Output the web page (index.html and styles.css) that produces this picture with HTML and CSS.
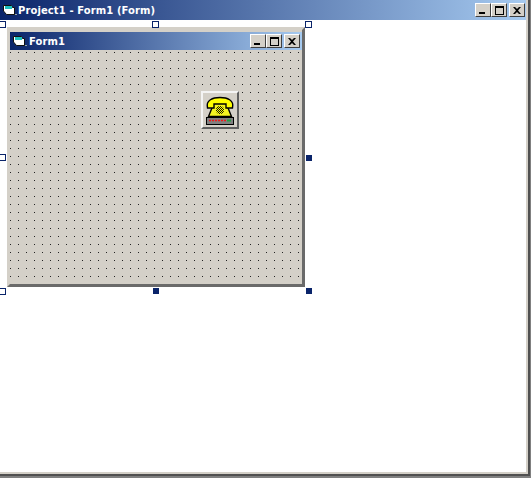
FILE: index.html
```html
<!DOCTYPE html>
<html lang="en">
<head>
    <meta charset="UTF-8">
    <meta name="viewport" content="width=device-width, initial-scale=1.0">
    <title>Project1 - Form1 (Form)</title>
    <link rel="stylesheet" href="styles.css">
</head>
<body>
    <div class="window designer">
        <div class="titlebar">
            <svg class="app-icon" viewBox="0 0 16 16" width="16" height="16">
                <path d="M1.5 3.5 H9.5 L10.5 5.5 H12.5 V12.5 H4.5 L1.5 9 Z" fill="#fff" stroke="#111" stroke-width="1"/>
                <path d="M3 4 H10 V7 H3 Z" fill="#20c0c0"/>
                <path d="M13 12 h2 v1 h-2 Z" fill="#9aa"/>
            </svg>
            <span class="title">Project1 - Form1 (Form)</span>
            <div class="caption-buttons">
                <button class="caption-btn"><span class="glyph-min"></span></button>
                <button class="caption-btn"><span class="glyph-max"></span></button>
                <button class="caption-btn close-btn">
                    <svg viewBox="0 0 8 7" width="8" height="7"><path d="M0 0 H2 L4 2 L6 0 H8 L5 3.5 L8 7 H6 L4 5 L2 7 H0 L3 3.5 Z" fill="#000"/></svg>
                </button>
            </div>
        </div>
        <div class="client">
            <div class="form-window">
                <div class="titlebar form-titlebar">
                    <svg class="app-icon" viewBox="0 0 16 16" width="16" height="16">
                        <path d="M1.5 3.5 H9.5 L10.5 5.5 H12.5 V12.5 H4.5 L1.5 9 Z" fill="#fff" stroke="#111" stroke-width="1"/>
                        <path d="M3 4 H10 V7 H3 Z" fill="#20c0c0"/>
                        <path d="M13 12 h2 v1 h-2 Z" fill="#9aa"/>
                    </svg>
                    <span class="title form-title">Form1</span>
                    <div class="caption-buttons">
                        <button class="caption-btn"><span class="glyph-min"></span></button>
                        <button class="caption-btn"><span class="glyph-max"></span></button>
                        <button class="caption-btn close-btn">
                            <svg viewBox="0 0 8 7" width="8" height="7"><path d="M0 0 H2 L4 2 L6 0 H8 L5 3.5 L8 7 H6 L4 5 L2 7 H0 L3 3.5 Z" fill="#000"/></svg>
                        </button>
                    </div>
                </div>
                <div class="form-grid">
                    <button class="phone-btn">
                        <svg viewBox="0 0 32 32" width="32" height="32">
                            <defs>
                                <pattern id="dial" width="2" height="2" patternUnits="userSpaceOnUse">
                                    <rect width="2" height="2" fill="#ffff00"/>
                                    <rect width="1" height="1" fill="#111"/>
                                    <rect x="1" y="1" width="1" height="1" fill="#111"/>
                                </pattern>
                            </defs>
                            <path d="M10 9 H22 L27.5 22.5 H4.5 Z" fill="#f4f420" stroke="#000" stroke-width="1.4"/>
                            <path d="M3.5 14 C1.5 6 9 3.5 16 3.5 C23 3.5 30.5 6 28.5 14 H22 V10 H10 V14 Z" fill="#ffff00" stroke="#000" stroke-width="1.4"/>
                            <circle cx="16" cy="16" r="4" fill="url(#dial)"/>
                            <rect x="2.5" y="23.5" width="27" height="7" fill="#808080" stroke="#000" stroke-width="1"/>
                            <path d="M5 26.5 H23" stroke="#f01818" stroke-width="1.5" stroke-dasharray="2 1"/>
                            <rect x="23" y="25.5" width="4" height="2" fill="#20a040"/>
                        </svg>
                    </button>
                </div>
            </div>
        </div>
    </div>

    <!-- sizing handles around the form -->
    <span class="handle h-tl"></span>
    <span class="handle h-tm"></span>
    <span class="handle h-tr"></span>
    <span class="handle h-ml"></span>
    <span class="handle filled h-mr"></span>
    <span class="handle h-bl"></span>
    <span class="handle filled h-bm"></span>
    <span class="handle filled h-br"></span>
</body>
</html>
```

FILE: styles.css
```css
/* Global Styles */
html, body {
    height: 100%;
}

body {
    margin: 0;
    overflow: hidden;
    font-family: 'DejaVu Sans', Verdana, sans-serif;
    background-color: #808080;
    position: relative;
}

/* Outer designer window */
.designer {
    width: 530px;
    height: 476px;
    box-sizing: border-box;
    display: flex;
    flex-direction: column;
    background-color: #d4d0c8;
    padding: 0 2px 2px 0;
    border-right: 2px solid #505050;
    border-bottom: 2px solid #505050;
}

/* Title bars */
.titlebar {
    height: 20px;
    flex: none;
    display: flex;
    align-items: center;
    padding: 0 1px 0 2px;
    color: #fff;
    font-size: 10px;
    font-weight: bold;
    background: linear-gradient(to right, #0a246a, #a6caf0);
    box-sizing: border-box;
}

.title {
    letter-spacing: 0.1px;
    white-space: nowrap;
}

.form-title {
    margin-left: 1px;
}

.app-icon {
    flex: none;
}

.caption-buttons {
    margin-left: auto;
    display: flex;
}

.caption-btn {
    width: 16px;
    height: 14px;
    padding: 0;
    background-color: #d4d0c8;
    border: 1px solid;
    border-color: #fff #404040 #404040 #fff;
    display: flex;
    align-items: center;
    justify-content: center;
}

.close-btn {
    margin-left: 2px;
}

.glyph-min {
    width: 6px;
    height: 2px;
    background-color: #000;
    margin-top: 6px;
    margin-right: 2px;
}

.glyph-max {
    width: 9px;
    height: 9px;
    box-sizing: border-box;
    border: 1px solid #000;
    border-top-width: 2px;
}

/* Client area */
.client {
    flex: 1;
    background-color: #fff;
    padding: 7px 0 0 7px;
}

/* The form being designed */
.form-window {
    width: 298px;
    height: 260px;
    box-sizing: border-box;
    display: flex;
    flex-direction: column;
    background-color: #d4d0c8;
    border: 3px solid #d4d0c8;
    border-right-color: #6a6a6a;
    border-bottom-color: #6a6a6a;
    padding-top: 2px;
}

.form-titlebar {
    height: 18px;
    padding-right: 2px;
}

.form-grid {
    flex: 1;
    padding: 41px 0 0 191px;
    background-color: #d4d0c8;
    background-image: conic-gradient(from 0deg at 1px 1px, transparent 75%, #222 0);
    background-size: 8px 8px;
    background-position: 0 2px;
}

.phone-btn {
    width: 38px;
    height: 38px;
    padding: 0;
    display: flex;
    align-items: center;
    justify-content: center;
    background-color: #d4d0c8;
    border: 2px solid;
    border-color: #f4f4f4 #606060 #606060 #f4f4f4;
}

/* Sizing handles */
.handle {
    position: absolute;
    width: 7px;
    height: 7px;
    box-sizing: border-box;
    background-color: #fff;
    border: 1px solid #0a246a;
}

.handle.filled {
    width: 6px;
    height: 6px;
    background-color: #0a246a;
}

.h-tl { left: -1px; top: 21px; }
.h-tm { left: 152px; top: 21px; }
.h-tr { left: 305px; top: 21px; }
.h-ml { left: -1px; top: 154px; }
.h-mr { left: 306px; top: 155px; }
.h-bl { left: -1px; top: 288px; }
.h-bm { left: 153px; top: 288px; }
.h-br { left: 306px; top: 288px; }
```
